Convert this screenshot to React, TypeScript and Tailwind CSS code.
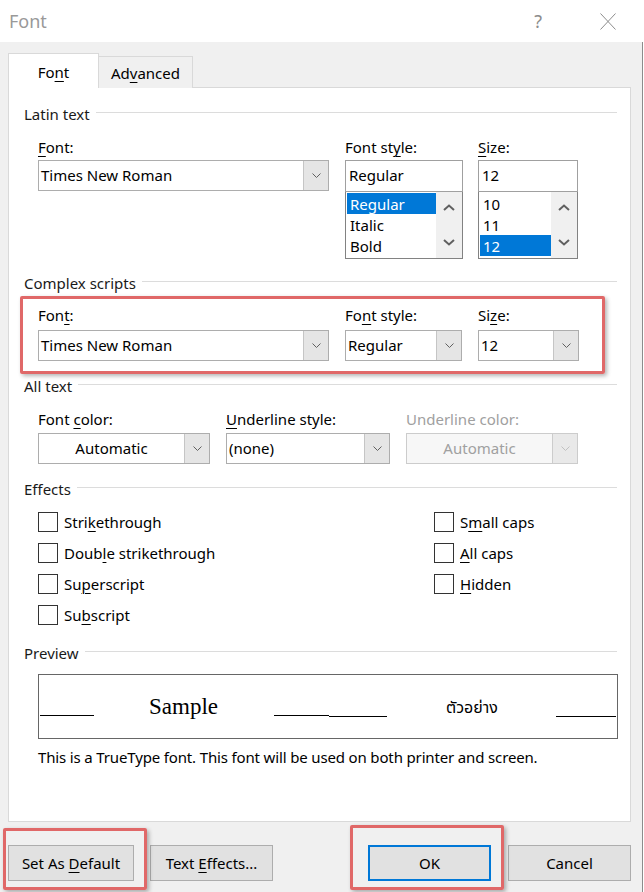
import React from "react";

function Acc({ children }: { children: React.ReactNode }) {
  return <span className="underline underline-offset-[3px] decoration-1">{children}</span>;
}

function SmallChevron({ color = "#606060" }: { color?: string }) {
  return (
    <svg width="9" height="5" viewBox="0 0 9 5">
      <path d="M0.5 0.5 L4.5 4.5 L8.5 0.5" fill="none" stroke={color} strokeWidth="1" />
    </svg>
  );
}

function ScrollChevron({ up }: { up?: boolean }) {
  return (
    <svg width="12" height="7" viewBox="0 0 12 7">
      <path
        d={up ? "M1 6 L6 1.5 L11 6" : "M1 1 L6 5.5 L11 1"}
        fill="none"
        stroke="#606060"
        strokeWidth="2"
      />
    </svg>
  );
}

function SectionHeader({ label }: { label: string }) {
  return (
    <div className="flex h-[20px] gap-[6px]">
      <span className="leading-[20px] text-[#1a1a1a]">{label}</span>
      <div className="flex-1 h-px bg-[#dcdcdc] mt-[8px]" />
    </div>
  );
}

function Combo({
  className,
  text,
  center,
  disabled,
}: {
  className: string;
  text: string;
  center?: boolean;
  disabled?: boolean;
}) {
  return (
    <div
      className={`flex h-[31px] border ${
        disabled ? "border-[#cccccc] bg-[#f7f7f7]" : "border-[#adadad] bg-white"
      } ${className}`}
    >
      <div
        className={`flex-1 flex items-center px-[2px] pb-[2px] leading-[20px] ${
          center ? "justify-center" : ""
        } ${disabled ? "text-[#a0a0a0]" : ""}`}
      >
        {text}
      </div>
      <div
        className={`w-[25px] flex items-center justify-center border-l ${
          disabled ? "bg-[#e9e9e9] border-[#cccccc]" : "bg-[#e5e5e5] border-[#c5c5c5]"
        }`}
      >
        <SmallChevron color={disabled ? "#c0c0c0" : "#606060"} />
      </div>
    </div>
  );
}

function ListBox({
  className,
  value,
  items,
  selected,
}: {
  className: string;
  value: string;
  items: string[];
  selected: number;
}) {
  return (
    <div className={`flex flex-col ${className}`}>
      <div className="h-[32px] border border-[#a0a0a0] bg-white flex items-center px-[3px] pb-[2px]">{value}</div>
      <div className="h-[67px] border border-t-0 border-[#828282] bg-white flex">
        <div className="flex-1 flex flex-col pt-[1px] pl-[1px]">
          {items.map((it, i) => (
            <div
              key={it}
              className={`h-[21px] leading-[21px] pt-[2px] px-[3px] ${
                i === selected ? "bg-[#0078d7] text-white" : ""
              }`}
            >
              <span className="block leading-[19px]">{it}</span>
            </div>
          ))}
        </div>
        <div className="w-[26px] bg-[#f0f0f0] flex flex-col items-center justify-between py-[12px]">
          <ScrollChevron up />
          <ScrollChevron />
        </div>
      </div>
    </div>
  );
}

function Check({ children }: { children: React.ReactNode }) {
  return (
    <div className="flex items-center h-[20px] gap-[6px]">
      <div className="w-[20px] h-[20px] border border-[#333333] bg-white" />
      <span className="leading-[20px]">{children}</span>
    </div>
  );
}

function Button({
  className,
  children,
  primary,
}: {
  className: string;
  children: React.ReactNode;
  primary?: boolean;
}) {
  return (
    <div
      className={`h-[36px] flex items-center justify-center bg-[#e1e1e1] ${
        primary ? "border-2 border-[#0078d7]" : "border border-[#adadad]"
      } ${className}`}
    >
      <span className="whitespace-nowrap">{children}</span>
    </div>
  );
}

export default function App() {
  return (
    <div className="relative w-[644px] h-[892px] overflow-hidden bg-white font-['Noto_Sans',sans-serif] text-[15px] text-black">
      {/* title bar */}
      <div className="h-[42px] bg-white flex items-center">
        <span className="pl-[9px] text-[18px] text-[#999999]">Font</span>
        <span className="ml-auto text-[18px] text-[#8c8c8c]">?</span>
        <svg className="ml-[58px] mr-[28px]" width="16" height="17" viewBox="0 0 16 17">
          <path d="M0.5 0.5 L15.5 16.5 M15.5 0.5 L0.5 16.5" stroke="#8c8c8c" strokeWidth="1" />
        </svg>
      </div>

      {/* body */}
      <div className="w-[643px] h-[850px] bg-[#f0f0f0] border-r border-[#8c8c8c] pt-[11px] pl-[8px]">
        {/* tabs */}
        <div className="relative z-10 flex items-end h-[35px] mb-[-1px]">
          <div className="w-[91px] h-[35px] bg-white border border-b-0 border-[#d9d9d9] flex items-center justify-center pt-[2px]">
            <span>
              Fo<Acc>n</Acc>t
            </span>
          </div>
          <div className="w-[94px] h-[32px] bg-[#f0f0f0] border border-l-0 border-b-0 border-[#d9d9d9] flex items-center justify-center pt-[1px]">
            <span>
              Ad<Acc>v</Acc>anced
            </span>
          </div>
        </div>

        {/* tab page */}
        <div className="w-[623px] h-[735px] bg-white border border-[#d9d9d9] pl-[15px] pr-[13px] pt-[16px]">
          <SectionHeader label="Latin text" />
          <div className="flex ml-[14px] mt-[13px]">
            <div className="w-[291px]">
              <div className="h-[20px] leading-[20px]">
                <Acc>F</Acc>ont:
              </div>
              <Combo className="mt-[3px] w-[291px]" text="Times New Roman" />
            </div>
            <div className="ml-[16px] w-[118px]">
              <div className="h-[20px] leading-[20px]">
                Font st<Acc>y</Acc>le:
              </div>
              <ListBox className="mt-[3px] w-[118px]" value="Regular" items={["Regular", "Italic", "Bold"]} selected={0} />
            </div>
            <div className="ml-[15px] w-[100px]">
              <div className="h-[20px] leading-[20px]">
                <Acc>S</Acc>ize:
              </div>
              <ListBox className="mt-[3px] w-[100px]" value="12" items={["10", "11", "12"]} selected={2} />
            </div>
          </div>

          <div className="mt-[14px]">
            <SectionHeader label="Complex scripts" />
          </div>
          <div className="flex ml-[14px] mt-[12px]">
            <div className="w-[291px]">
              <div className="h-[20px] leading-[20px]">
                Fon<Acc>t</Acc>:
              </div>
              <Combo className="mt-[5px] w-[291px]" text="Times New Roman" />
            </div>
            <div className="ml-[16px] w-[117px]">
              <div className="h-[20px] leading-[20px]">
                Fo<Acc>n</Acc>t style:
              </div>
              <Combo className="mt-[5px] w-[117px]" text="Regular" />
            </div>
            <div className="ml-[16px] w-[101px]">
              <div className="h-[20px] leading-[20px]">
                Si<Acc>z</Acc>e:
              </div>
              <Combo className="mt-[5px] w-[101px]" text="12" />
            </div>
          </div>

          <div className="mt-[15px]">
            <SectionHeader label="All text" />
          </div>
          <div className="flex ml-[14px] mt-[13px]">
            <div className="w-[172px]">
              <div className="h-[20px] leading-[20px]">
                Font <Acc>c</Acc>olor:
              </div>
              <Combo className="mt-[4px] w-[172px]" text="Automatic" center />
            </div>
            <div className="ml-[16px] w-[164px]">
              <div className="h-[20px] leading-[20px]">
                <Acc>U</Acc>nderline style:
              </div>
              <Combo className="mt-[4px] w-[164px]" text="(none)" />
            </div>
            <div className="ml-[16px] w-[172px]">
              <div className="h-[20px] leading-[20px] text-[#a0a0a0]">Underline color:</div>
              <Combo className="mt-[4px] w-[172px]" text="Automatic" center disabled />
            </div>
          </div>

          <div className="mt-[15px]">
            <SectionHeader label="Effects" />
          </div>
          <div className="grid grid-cols-[396px_1fr] gap-y-[11px] ml-[14px] mt-[13px]">
            <Check>
              Stri<Acc>k</Acc>ethrough
            </Check>
            <Check>
              S<Acc>m</Acc>all caps
            </Check>
            <Check>
              Doub<Acc>l</Acc>e strikethrough
            </Check>
            <Check>
              <Acc>A</Acc>ll caps
            </Check>
            <Check>
              Su<Acc>p</Acc>erscript
            </Check>
            <Check>
              <Acc>H</Acc>idden
            </Check>
            <Check>
              Su<Acc>b</Acc>script
            </Check>
          </div>

          <div className="mt-[18px]">
            <SectionHeader label="Preview" />
          </div>
          <div className="ml-[14px] mt-[11px] w-[580px] h-[65px] border border-[#666666] flex items-start">
            <div className="ml-[1px] mt-[40px] w-[54px] h-px bg-black" />
            <div className="ml-[55px] mt-[17px] w-[69px] text-center whitespace-nowrap font-['Liberation_Serif',serif] text-[23px] leading-[30px]">
              Sample
            </div>
            <div className="ml-[56px] mt-[40px] w-[55px] h-px bg-black" />
            <div className="mt-[41px] w-[58px] h-px bg-black" />
            <div className="ml-[59px] mt-[21px] w-[50px] text-center whitespace-nowrap font-['Noto_Sans_Thai','Noto_Sans',sans-serif] text-[16px] leading-[24px]">
              ตัวอย่าง
            </div>
            <div className="ml-[60px] mt-[41px] w-[60px] h-px bg-black" />
          </div>
          <div className="ml-[14px] mt-[8px] h-[20px] leading-[20px] whitespace-nowrap tracking-[-0.15px]">
            This is a TrueType font. This font will be used on both printer and screen.
          </div>
        </div>

        {/* buttons */}
        <div className="flex mt-[23px]">
          <Button className="w-[126px]">
            Set As <Acc>D</Acc>efault
          </Button>
          <Button className="ml-[16px] w-[123px]">
            Text <Acc>E</Acc>ffects...
          </Button>
          <Button className="ml-[95px] w-[123px]" primary>
            OK
          </Button>
          <Button className="ml-[17px] w-[123px]">Cancel</Button>
        </div>
      </div>

      {/* highlight annotations */}
      <div className="absolute left-[20px] top-[296px] w-[585px] h-[78px] border-[3px] border-[#e06868] rounded-[2px] shadow-[2px_2px_4px_rgba(0,0,0,0.3)]" />
      <div className="absolute left-[3px] top-[828px] w-[144px] h-[62px] border-[3px] border-[#e06868] rounded-[2px] shadow-[2px_2px_4px_rgba(0,0,0,0.3)]" />
      <div className="absolute left-[350px] top-[825px] w-[154px] h-[65px] border-[3px] border-[#e06868] rounded-[2px] shadow-[2px_2px_4px_rgba(0,0,0,0.3)]" />
    </div>
  );
}
